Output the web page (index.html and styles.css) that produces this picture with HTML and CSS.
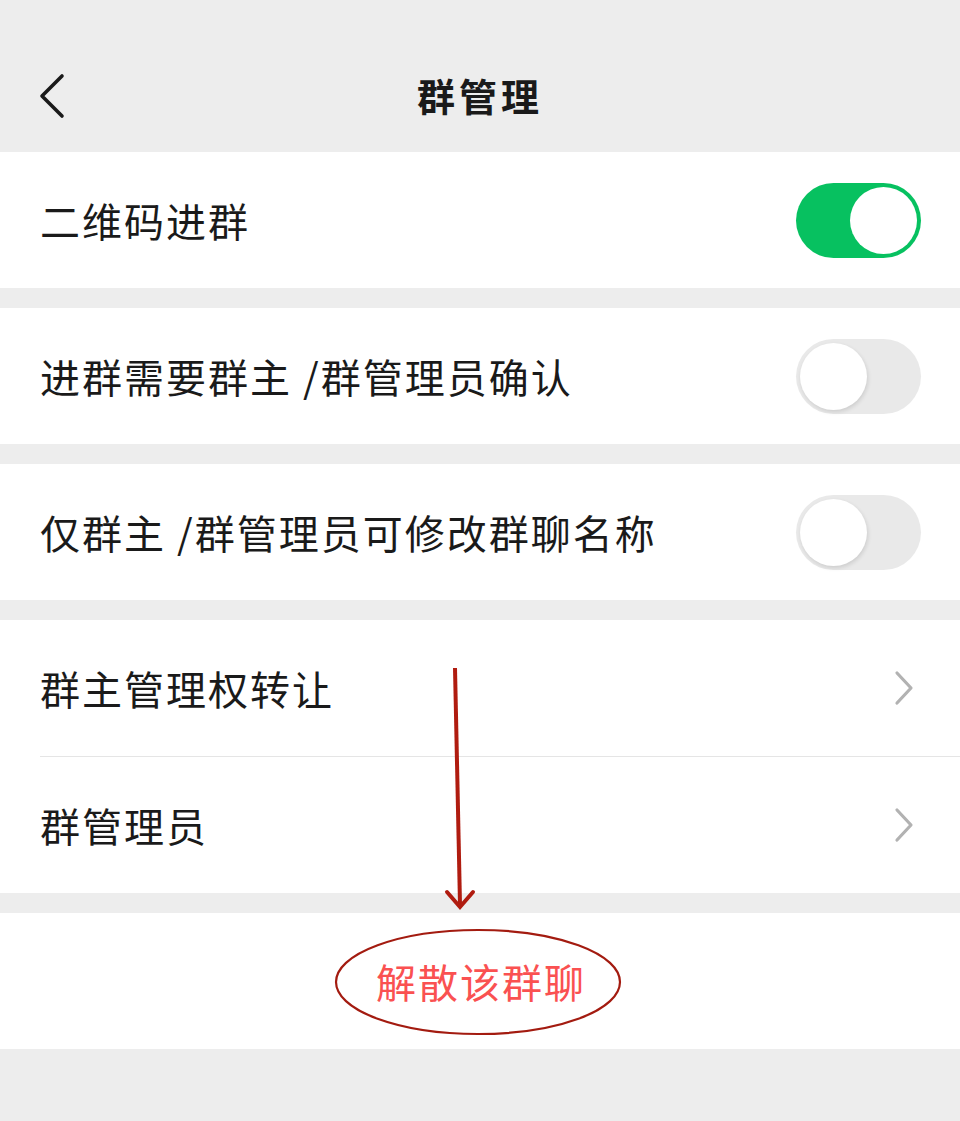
FILE: index.html
```html
<!DOCTYPE html>
<html lang="zh-CN">
<head>
<meta charset="utf-8">
<title>群管理</title>
<link rel="stylesheet" href="styles.css">
</head>
<body>
<div class="page">
  <header class="topbar">
    <svg class="back" width="30" height="46" viewBox="0 0 30 46"><polyline points="24,3 4,23 24,43" fill="none" stroke="#1a1a1a" stroke-width="3.6" stroke-linecap="round" stroke-linejoin="round"/></svg>
    <h1 class="title">群管理</h1>
  </header>

  <section class="group">
    <div class="row"><span class="label">二维码进群</span><span class="switch on"><span class="knob"></span></span></div>
  </section>
  <section class="group">
    <div class="row"><span class="label">进群需要群主 /群管理员确认</span><span class="switch"><span class="knob"></span></span></div>
  </section>
  <section class="group">
    <div class="row"><span class="label">仅群主 /群管理员可修改群聊名称</span><span class="switch"><span class="knob"></span></span></div>
  </section>
  <section class="group">
    <div class="row"><span class="label">群主管理权转让</span><svg class="chev" width="22" height="36" viewBox="0 0 22 36"><polyline points="4,3 18,18 4,33" fill="none" stroke="#b2b2b2" stroke-width="3.2" stroke-linecap="round" stroke-linejoin="round"/></svg></div>
    <div class="divider"></div>
    <div class="row"><span class="label">群管理员</span><svg class="chev" width="22" height="36" viewBox="0 0 22 36"><polyline points="4,3 18,18 4,33" fill="none" stroke="#b2b2b2" stroke-width="3.2" stroke-linecap="round" stroke-linejoin="round"/></svg></div>
  </section>
  <section class="group">
    <div class="row center"><span class="danger">解散该群聊</span></div>
  </section>

  <svg class="annot" width="960" height="1121" viewBox="0 0 960 1121">
    <line x1="455" y1="668" x2="460" y2="904" stroke="#b01c10" stroke-width="4"/>
    <polyline points="447,892 460,907 473,892" fill="none" stroke="#b01c10" stroke-width="4" stroke-linecap="round"/>
    <ellipse cx="478" cy="982" rx="142" ry="52" fill="none" stroke="#a31b10" stroke-width="2.2"/>
  </svg>
</div>
</body>
</html>
```

FILE: styles.css
```css
* { box-sizing: border-box; }
html, body { margin: 0; padding: 0; }
body {
  background: #ededed;
  font-family: "Noto Sans CJK SC", "Noto Sans", sans-serif;
  color: #1a1a1a;
}
.page {
  position: relative;
  width: 960px;
  min-height: 1121px;
  background: #ededed;
}
.topbar {
  height: 152px;
  position: relative;
  display: flex;
  align-items: center;
  justify-content: center;
}
.back {
  position: absolute;
  left: 38px;
  top: 73px;
}
.title {
  margin: 38px 0 0 0;
  font-size: 38px;
  font-weight: 700;
  letter-spacing: 4px;
  line-height: 1;
  color: #1a1a1a;
}
.group {
  background: #fff;
  margin-bottom: 20px;
}
.row {
  height: 136px;
  display: flex;
  align-items: center;
  justify-content: space-between;
  padding: 0 39px 0 40px;
}
.row.center { justify-content: center; padding: 0; }
.label {
  font-size: 40px;
  letter-spacing: 2px;
  line-height: 1;
  color: #1a1a1a;
}
.danger {
  font-size: 40px;
  letter-spacing: 2px;
  line-height: 1;
  color: #fa5151;
  margin-left: 2px;
}
.divider {
  height: 1px;
  background: #e5e5e5;
  margin-left: 40px;
}
.switch {
  width: 125px;
  height: 75px;
  border-radius: 38px;
  background: #e9e9e9;
  position: relative;
  flex-shrink: 0;
}
.switch .knob {
  position: absolute;
  top: 4px;
  left: 4px;
  width: 67px;
  height: 67px;
  border-radius: 50%;
  background: #fff;
  box-shadow: 1px 2px 4px rgba(0,0,0,0.12);
}
.switch.on { background: #07c160; }
.switch.on .knob {
  left: auto;
  right: 4px;
  box-shadow: none;
}
.chev { margin-right: 6px; }
.annot {
  position: absolute;
  left: 0;
  top: 0;
  pointer-events: none;
}
```
